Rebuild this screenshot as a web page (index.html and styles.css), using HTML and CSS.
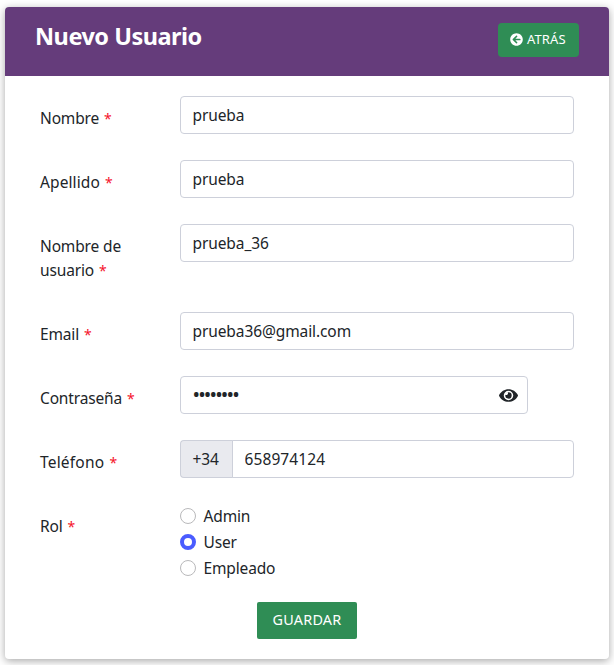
FILE: index.html
```html
<!DOCTYPE html>
<html lang="es">
<head>
<meta charset="utf-8">
<title>Nuevo Usuario</title>
<link rel="stylesheet" href="styles.css">
</head>
<body>
<main class="card">
  <header class="card-header">
    <h1 class="title">Nuevo Usuario</h1>
    <a class="back" href="#">
      <svg class="back-icon" viewBox="0 0 512 512" aria-hidden="true"><path fill="currentColor" d="M256 504C119 504 8 393 8 256S119 8 256 8s248 111 248 248-111 248-248 248zm28.900-143.600L209.400 288H392c13.300 0 24-10.700 24-24v-16c0-13.300-10.700-24-24-24H209.400l75.500-72.400c9.700-9.300 9.900-24.800.4-34.300l-11-10.900c-9.400-9.400-24.600-9.400-33.900 0L107.700 239c-9.400 9.400-9.400 24.600 0 33.900l132.700 132.700c9.400 9.400 24.600 9.400 33.900 0l11-10.900c9.500-9.500 9.300-25-.4-34.300z"/></svg>
      <span class="back-text">ATRÁS</span>
    </a>
  </header>
  <form class="form">
    <div class="row">
      <label class="label" for="nombre">Nombre <span class="req">*</span></label>
      <input class="control" id="nombre" type="text" value="prueba">
    </div>
    <div class="row">
      <label class="label apellido" for="apellido">Apellido <span class="req">*</span></label>
      <input class="control" id="apellido" type="text" value="prueba">
    </div>
    <div class="row">
      <label class="label" for="usuario">Nombre de<br>usuario <span class="req">*</span></label>
      <input class="control" id="usuario" type="text" value="prueba_36">
    </div>
    <div class="row">
      <label class="label" for="email">Email <span class="req">*</span></label>
      <input class="control" id="email" type="text" value="prueba36@gmail.com">
    </div>
    <div class="row">
      <label class="label" for="clave">Contraseña <span class="req">*</span></label>
      <div class="control password">
        <input class="password-input" id="clave" type="password" value="prueba36">
        <svg class="eye" viewBox="0 0 576 512" aria-hidden="true"><path fill="currentColor" d="M572.520 241.400C518.290 135.590 410.930 64 288 64S57.680 135.640 3.480 241.410a32.350 32.350 0 0 0 0 29.190C57.710 376.410 165.070 448 288 448s230.320-71.640 284.520-177.410a32.350 32.350 0 0 0 0-29.190zM288 400a144 144 0 1 1 144-144 143.930 143.930 0 0 1-144 144zm0-240a95.310 95.310 0 0 0-25.310 3.790 47.850 47.850 0 0 1-66.900 66.900A95.780 95.780 0 1 0 288 160z"/></svg>
      </div>
    </div>
    <div class="row">
      <label class="label telefono" for="telefono">Teléfono <span class="req">*</span></label>
      <div class="group">
        <span class="prefix">+34</span>
        <input class="control phone" id="telefono" type="text" value="658974124">
      </div>
    </div>
    <div class="row">
      <span class="label">Rol <span class="req">*</span></span>
      <div class="radios">
        <label class="option"><input class="radio" type="radio" name="rol"><span>Admin</span></label>
        <label class="option"><input class="radio" type="radio" name="rol" checked><span>User</span></label>
        <label class="option"><input class="radio" type="radio" name="rol"><span>Empleado</span></label>
      </div>
    </div>
    <button class="save" type="button">GUARDAR</button>
  </form>
</main>
</body>
</html>
```
FILE: styles.css
```css
* { box-sizing: border-box; }
body {
  margin: 0;
  padding: 7px 5px 6px;
  background: #fff;
  color: #212529;
  font: 15.5px/24px "Noto Sans", sans-serif;
  letter-spacing: -0.15px;
}
.card {
  height: 652px;
  border-radius: 4px;
  background: #fff;
  box-shadow: 0 2px 8px rgba(0, 0, 0, .35);
}
.card-header {
  display: flex;
  justify-content: space-between;
  align-items: flex-start;
  height: 69px;
  padding: 16px 30px 0;
  border-radius: 4px 4px 0 0;
  background: #653c7b;
  color: #fff;
}
.title {
  margin: -1px 0 0;
  font-size: 23.5px;
  line-height: 28px;
  font-weight: 700;
  letter-spacing: -0.5px;
}
.back {
  display: flex;
  align-items: center;
  gap: 4px;
  width: 81px;
  height: 34px;
  padding-left: 12px;
  border-radius: 4px;
  background: #2f8d55;
  color: #fff;
  font-size: 13px;
  letter-spacing: 0.1px;
  text-decoration: none;
}
.back-text { position: relative; top: -1px; }
.back-icon { width: 13px; height: 13px; margin-top: -1px; }
.form { display: flex; flex-direction: column; padding: 20px 35px 0; }
.row {
  display: grid;
  grid-template-columns: 140px 394px;
  align-items: start;
}
.label { padding-top: 10px; margin-bottom: 30px; }
.apellido { letter-spacing: 0.1px; }
.telefono { letter-spacing: 0.2px; }
.req { color: #f5132b; margin-left: 1px; font-size: 14px; line-height: 1; }
.control {
  width: 100%;
  height: 38px;
  padding: 0 11.5px;
  border: 1px solid #cdd0da;
  border-radius: 4px;
  background: #fff;
  color: inherit;
  font: inherit;
  letter-spacing: -0.1px;
}
.password { display: flex; align-items: center; width: 348px; padding-right: 9px; }
.password-input {
  flex: 1;
  min-width: 0;
  padding: 0;
  border: 0;
  background: transparent;
  color: inherit;
  font: 20px/24px "Noto Sans", sans-serif;
  letter-spacing: -1.85px;
}
.eye { width: 19px; height: 17px; }
.group { display: flex; }
.prefix {
  flex: none;
  width: 53px;
  height: 38px;
  padding-left: 11.5px;
  border: 1px solid #cdd0da;
  border-right: 0;
  border-radius: 4px 0 0 4px;
  background: #e9eaef;
  line-height: 36px;
}
.phone { flex: 1; min-width: 0; margin-left: -1px; border-radius: 0 4px 4px 0; letter-spacing: 0.1px; }
.radios { display: flex; flex-direction: column; height: 64px; }
.option { display: flex; flex: none; align-items: center; gap: 7.5px; height: 26px; }
.option:first-child { margin-top: -1px; }
.radio {
  appearance: none;
  width: 16px;
  height: 16px;
  margin: 0;
  border: 1px solid #b9b9bb;
  border-radius: 50%;
  background: #fff;
}
.radio:checked { border: 4.5px solid #4a5cff; }
.save {
  align-self: center;
  width: 100px;
  height: 37px;
  margin-top: 34px;
  padding: 0 0 1px;
  border: 0;
  border-radius: 2px;
  background: #2f8d55;
  color: #fff;
  font: 14.4px/36px "Noto Sans", sans-serif;
  letter-spacing: 0.2px;
}
```
